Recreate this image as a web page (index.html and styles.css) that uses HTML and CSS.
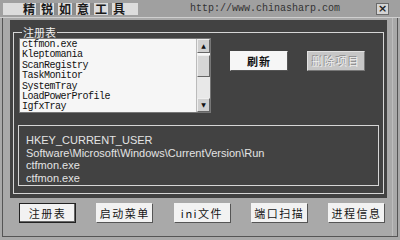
FILE: index.html
```html
<!DOCTYPE html>
<html>
<head>
<meta charset="utf-8">
<link rel="stylesheet" href="styles.css">
</head>
<body>
<div class="window">
  <div class="titlebar">
    <div class="title-box">
      <span class="tch">精</span><span class="sep"></span><span class="tch">锐</span><span class="sep"></span><span class="tch">如</span><span class="sep"></span><span class="tch">意</span><span class="sep"></span><span class="tch">工</span><span class="sep"></span><span class="tch">具</span>
    </div>
    <div class="url">http://www.chinasharp.com</div>
    <div class="close">×</div>
  </div>
  <div class="frame">
    <div class="panel">
      <fieldset class="group">
        <legend class="group-label">注册表</legend>
        <div class="top-row">
          <div class="listbox">
            <ul class="items">
              <li>ctfmon.exe</li>
              <li>Kleptomania</li>
              <li>ScanRegistry</li>
              <li>TaskMonitor</li>
              <li>SystemTray</li>
              <li>LoadPowerProfile</li>
              <li>IgfxTray</li>
            </ul>
            <div class="scrollbar">
              <div class="sb-btn">▲</div>
              <div class="sb-thumb"></div>
              <div class="sb-track"></div>
              <div class="sb-btn">▼</div>
            </div>
          </div>
          <div class="actions">
            <div class="btn btn-refresh">刷新</div>
            <div class="btn btn-disabled">删除项目</div>
          </div>
        </div>
        <div class="info">
          <div>HKEY_CURRENT_USER</div>
          <div>Software\Microsoft\Windows\CurrentVersion\Run</div>
          <div>ctfmon.exe</div>
          <div>ctfmon.exe</div>
        </div>
      </fieldset>
    </div>
    <div class="tabs">
      <div class="tab tab-active">注册表</div>
      <div class="tab">启动菜单</div>
      <div class="tab">ini文件</div>
      <div class="tab">端口扫描</div>
      <div class="tab">进程信息</div>
    </div>
  </div>
</div>
</body>
</html>
```
FILE: styles.css
```css
html, body {
  margin: 0;
  padding: 0;
}
body {
  width: 400px;
  height: 240px;
  background: #a9a9a9;
  overflow: hidden;
  font-family: "Noto Sans CJK SC", sans-serif;
}
.window {
  width: 400px;
  height: 240px;
  display: flex;
  flex-direction: column;
}
.titlebar {
  height: 17px;
  background: #a0a0a0;
  border-bottom: 1px solid #cfcfcf;
  display: flex;
  align-items: flex-start;
  flex-shrink: 0;
}
.title-box {
  margin: 3px 0 0 3px;
  width: 135px;
  height: 12px;
  background: #dcdcdc;
  display: flex;
  align-items: center;
  padding-left: 19px;
  box-sizing: border-box;
}
.tch {
  font-size: 12px;
  font-weight: 700;
  color: #1a1a1a;
  line-height: 12px;
  width: 14px;
  text-align: center;
}
.sep {
  width: 4px;
  height: 12px;
  background: #8c8c8c;
}
.url {
  margin: 2px 0 0 52px;
  font-family: "Liberation Mono", monospace;
  font-size: 10px;
  line-height: 13px;
  color: #333;
}
.close {
  margin: 3px 0 0 36px;
  width: 13px;
  height: 12px;
  box-sizing: border-box;
  background: #d4d4d4;
  border: 1px solid #6a6a6a;
  font-family: "DejaVu Sans", sans-serif;
  font-size: 11px;
  line-height: 10px;
  text-align: center;
  color: #222;
  font-weight: 700;
}
.frame {
  margin: 0 2px 3px 2px;
  border: 1px solid #555;
  border-top: none;
  flex: 1;
  display: flex;
  flex-direction: column;
  box-shadow: inset -5px 0 0 -1px #a9a9a9, inset -6px 0 0 -1px #bdbdbd;
}
.panel {
  margin: 2px 10px 0 7px;
  height: 178px;
  background: #424242;
  display: flex;
  flex-direction: column;
}
.group {
  margin: 6px 3px 4px 3px;
  padding: 0 4px 6px 4px;
  border: 1px solid #d6d6d6;
  min-width: 0;
  flex: 1;
  display: flex;
  flex-direction: column;
}
.group-label {
  margin-left: 4px;
  padding: 0 1px;
  font-size: 11px;
  line-height: 12px;
  color: #f0f0f0;
}
.top-row {
  display: flex;
  align-items: flex-start;
}
.listbox {
  margin-left: 1px;
  width: 192px;
  height: 75px;
  box-sizing: border-box;
  background: #f6f6f6;
  border: 1px solid #777;
  display: flex;
}
.items {
  list-style: none;
  margin: 0;
  padding: 1px 0 0 2px;
  flex: 1;
  font-family: "Liberation Mono", monospace;
  font-size: 10px;
  letter-spacing: -0.5px;
  line-height: 10.4px;
  color: #111;
  overflow: hidden;
}
.scrollbar {
  width: 13px;
  display: flex;
  flex-direction: column;
  border-left: 1px solid #bbb;
}
.sb-btn {
  height: 14px;
  box-sizing: border-box;
  background: #d0d0d0;
  border: 1px solid #eee;
  border-right-color: #666;
  border-bottom-color: #666;
  font-size: 6px;
  line-height: 12px;
  text-align: center;
  color: #111;
  font-family: "DejaVu Sans", sans-serif;
}
.sb-thumb {
  height: 22px;
  margin-top: 2px;
  box-sizing: border-box;
  background: #d6d6d6;
  border: 1px solid #eee;
  border-right-color: #666;
  border-bottom-color: #666;
}
.sb-track {
  flex: 1;
  background: #e8e8e8;
}
.actions {
  display: flex;
  gap: 19px;
  margin: 13px 0 0 19px;
}
.btn {
  width: 58px;
  height: 20px;
  box-sizing: border-box;
  font-size: 11px;
  line-height: 18px;
  text-align: center;
  letter-spacing: 1px;
}
.btn-refresh {
  background: #f6f6f6;
  border: 1px solid #f6f6f6;
  border-right-color: #555;
  border-bottom-color: #555;
  color: #111;
  font-weight: 700;
}
.btn-disabled {
  background: #c6c6c6;
  border: 1px solid #e2e2e2;
  border-right-color: #777;
  border-bottom-color: #777;
  color: #ededed;
  text-shadow: -1px -1px 0 #8a8a8a;
}
.info {
  margin-top: 12px;
  flex: 1;
  border: 1px solid #d6d6d6;
  padding: 8px 0 0 7px;
  font-family: "Liberation Sans", sans-serif;
  font-size: 11px;
  line-height: 12.7px;
  color: #e4e4e4;
}
.tabs {
  display: flex;
  justify-content: space-between;
  padding: 5px 12px 0 16px;
}
.tab {
  width: 57px;
  height: 20px;
  box-sizing: border-box;
  background: #f2f2f2;
  border: 1px solid #f2f2f2;
  border-right-color: #555;
  border-bottom-color: #555;
  font-size: 11px;
  line-height: 18px;
  text-align: center;
  letter-spacing: 1.5px;
  color: #151515;
}
.tab-active {
  border: 1px solid #222;
  box-shadow: inset -1px -1px 0 #666;
}
```
